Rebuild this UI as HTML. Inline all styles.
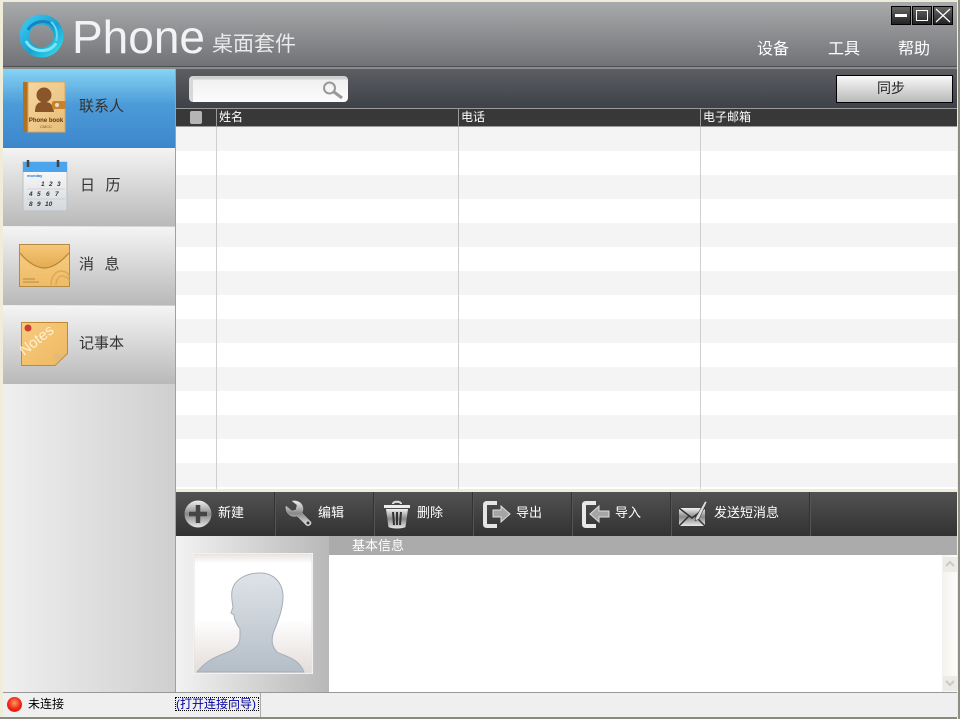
<!DOCTYPE html>
<html><head><meta charset="utf-8"><style>
html,body{margin:0;padding:0;background:#f1efe2}
#w{position:relative;width:960px;height:719px;overflow:hidden;background:#efecd9;font-family:"Liberation Sans","WenQuanYi Zen Hei","Noto Sans CJK SC",sans-serif;font-size:12px;line-height:14px}
#w div,#w svg,#w span{position:absolute;box-sizing:border-box}
.t{white-space:nowrap}
.side{left:3px;width:172px;height:78px;background:linear-gradient(#f4f4f4,#b9b9b9)}
.sl{font-size:15px;line-height:16px;color:#333;white-space:pre}
.sep{top:492px;width:2px;height:44px;background:linear-gradient(90deg,#222,#666)}
.act{top:506px;color:#fff;white-space:nowrap;font-size:13px}
.hd{top:110px;color:#fff;white-space:nowrap}
.vl{top:127px;width:1px;height:362px;background:#cfcfcf}
.hv{top:109px;width:1px;height:18px;background:#999}
.menu{top:41px;font-size:16px;line-height:18px;color:#fff;white-space:nowrap}
.wb{top:6px;width:20px;height:19px;border:1px solid #000;background:linear-gradient(#666,#222)}
</style></head><body><div id="w">
<!-- header -->
<div style="left:3px;top:2px;width:954px;height:64px;background:linear-gradient(#a9aaac,#717275)"></div>
<div style="left:3px;top:66px;width:954px;height:1px;background:#4e4f52"></div>
<div style="left:3px;top:67px;width:954px;height:2px;background:#8a8b8d"></div>
<svg style="left:18px;top:13px" width="47" height="46" viewBox="0 0 47 46"><defs><linearGradient id="rg" x1="0" y1="0" x2="1" y2="1"><stop offset="0" stop-color="#38c8ee"/><stop offset=".55" stop-color="#1a9fd2"/><stop offset="1" stop-color="#2fd6ea"/></linearGradient></defs><ellipse cx="23.500" cy="23" rx="17" ry="16.500" fill="none" stroke="url(#rg)" stroke-width="10"/><path d="M8 28C14 40 32 41 38 30" fill="none" stroke="#7be6f4" stroke-width="3"/><path d="M10 17C14 8 30 5 37 14" fill="none" stroke="#1685bd" stroke-width="3"/><path d="M33 9C39 14 40 22 38 28" fill="none" stroke="#5fdcf2" stroke-width="2"/></svg>
<div class="t" style="left:72px;top:11px;font-size:46px;line-height:52px;color:#f2f3f4">Phone</div>
<div class="t" style="left:212px;top:33px;font-size:21px;line-height:24px;color:#e8e9ea">桌面套件</div>
<div class="menu" style="left:757px">设备</div><div class="menu" style="left:828px">工具</div><div class="menu" style="left:898px">帮助</div>
<div class="wb" style="left:891px"></div><div style="left:895px;top:14px;width:12px;height:3px;background:#fff"></div>
<div class="wb" style="left:912px"></div><div style="left:916px;top:10px;width:12px;height:11px;border:1px solid #fff"></div>
<div class="wb" style="left:933px"></div><svg style="left:933px;top:6px" width="20" height="19"><path d="M3 3L17 16M17 3L3 16" stroke="#fff" stroke-width="1.200"/></svg>
<!-- sidebar -->
<div style="left:3px;top:69px;width:173px;height:624px;background:linear-gradient(90deg,#efefef,#cfcfcf)"></div>
<div style="left:175px;top:69px;width:1px;height:624px;background:#a0a0a0"></div>
<div class="side" style="top:69px;height:79px;background:linear-gradient(#86d4f4,#4c9bd8 45%,#3d86cb)"></div>
<div class="side" style="top:148px"></div><div class="side" style="top:227px"></div><div class="side" style="top:306px"></div>
<!-- book icon -->
<svg style="left:22px;top:80px" width="46" height="54" viewBox="0 0 46 54"><defs><linearGradient id="bk" x1="0" y1="0" x2="1" y2="1"><stop offset="0" stop-color="#f5d8a2"/><stop offset="1" stop-color="#e8bd78"/></linearGradient></defs><rect x="1" y="2" width="42" height="50" fill="url(#bk)"/><rect x="1" y="2" width="5" height="50" fill="#b5701f"/><rect x="6" y="2" width="37" height="50" fill="none" stroke="#d9a860"/><circle cx="22" cy="15" r="7.500" fill="#8a5528"/><path d="M13 32c0-9 4-10 9-10s9 1 10 10z" fill="#8a5528"/><rect x="30" y="21" width="14" height="8" rx="2" fill="#c9822a"/><circle cx="35" cy="25" r="2" fill="#ddd"/><text x="24" y="42" font-size="6" font-weight="bold" font-family="Liberation Sans" text-anchor="middle" fill="#5a3510">Phone book</text><text x="24" y="48" font-size="4" font-family="Liberation Sans" text-anchor="middle" fill="#7a5520">CMCC</text></svg>
<div class="sl" style="left:79px;top:99px">联系人</div>
<!-- calendar -->
<svg style="left:22px;top:159px" width="46" height="54" viewBox="0 0 46 54"><defs><linearGradient id="ca" x1="0" y1="0" x2="0" y2="1"><stop offset="0" stop-color="#fff"/><stop offset="1" stop-color="#d4d8dc"/></linearGradient></defs><rect x="1" y="3" width="44" height="49" fill="url(#ca)" stroke="#bcc0c4"/><path d="M1 3h44v10H1z" fill="#4ba5ee"/><path d="M6 1v7M36 1v7" stroke="#444" stroke-width="2.500"/><text x="5" y="18" font-size="4" fill="#2277dd" font-weight="bold" font-family="Liberation Sans">monday</text><g font-size="6.500" font-style="italic" font-weight="bold" font-family="Liberation Sans" fill="#333"><text x="19" y="27">1</text><text x="27" y="27">2</text><text x="35" y="27">3</text><text x="7" y="37">4</text><text x="15" y="37">5</text><text x="24" y="37">6</text><text x="33" y="37">7</text><text x="7" y="47">8</text><text x="15" y="47">9</text><text x="23" y="47">10</text></g><path d="M5 30h38M5 40h38" stroke="#bbb" stroke-width=".6"/></svg>
<div class="sl" style="left:80px;top:178px;letter-spacing:-.500px">日   历</div>
<!-- envelope -->
<svg style="left:19px;top:244px" width="52" height="44" viewBox="0 0 52 44"><defs><linearGradient id="en" x1="0" y1="0" x2="0" y2="1"><stop offset="0" stop-color="#f7cf87"/><stop offset="1" stop-color="#efbb66"/></linearGradient><linearGradient id="en2" x1="0" y1="0" x2="0" y2="1"><stop offset="0" stop-color="#f6c778"/><stop offset="1" stop-color="#e4ab50"/></linearGradient></defs><rect x=".5" y=".5" width="50" height="42" fill="url(#en)" stroke="#b58a45"/><path d="M1 1h49v8C40 20 32 24 25.500 24S10 20 1 9z" fill="url(#en2)"/><path d="M1 9C10 20 19 24 25.500 24S40 20 50 9" fill="none" stroke="#b5853a" stroke-width="1.200"/><path d="M32 41c0-10 6-14 10-14s8 2 8 6M37 41c0-6 3-9 6-9s7 2 7 5" fill="none" stroke="#dca954" stroke-width="1.500"/><path d="M4 35h12M4 38h16" stroke="#9a7a44" stroke-width=".8"/></svg>
<div class="sl" style="left:79px;top:257px;letter-spacing:-.500px">消   息</div>
<!-- notes -->
<svg style="left:20px;top:321px" width="50" height="46" viewBox="0 0 50 46"><defs><linearGradient id="nt" x1="0" y1="0" x2="1" y2="1"><stop offset="0" stop-color="#f7cb7e"/><stop offset="1" stop-color="#efb862"/></linearGradient></defs><path d="M1.500 1.500h46v31L35 44.500H1.500z" fill="url(#nt)" stroke="#c08a35"/><path d="M47 32L35 44c1-6 0-9-2-12 5 1 9 1 14 0z" fill="#e3ba78"/><circle cx="8" cy="7" r="3.500" fill="#d23a35"/><text x="4" y="35" transform="rotate(-38 4 35)" font-size="15" font-family="Liberation Sans" fill="#fff1d2">Notes</text></svg>
<div class="sl" style="left:79px;top:336px">记事本</div>
<!-- toolbar -->
<div style="left:176px;top:69px;width:781px;height:39px;background:linear-gradient(#5d5e62,#3d4148)"></div>
<div style="left:189px;top:76px;width:159px;height:26px;border-radius:4px;background:linear-gradient(#d0d0d0,#d0d0d0 3px,#f0f0f0 4px,#fcfcfc);border-left:4px solid #d8d8d8"></div>
<svg style="left:321px;top:80px" width="24" height="20"><circle cx="8.500" cy="8" r="5.500" fill="none" stroke="#999" stroke-width="2"/><path d="M13 12l8 6" stroke="#999" stroke-width="3"/></svg>
<div style="left:836px;top:75px;width:117px;height:28px;border:1px solid #000;background:linear-gradient(#f8f8f8,#b9b9b9)"></div>
<div class="t" style="left:877px;top:80px;font-size:14px;line-height:16px;color:#222">同步</div>
<!-- table -->
<div style="left:176px;top:108px;width:781px;height:19px;background:#383838;border-top:1px solid #9a9a9a;border-bottom:1px solid #9a9a9a"></div>
<div style="left:190px;top:111px;width:12px;height:13px;border-radius:2px;background:#b5b5b5"></div>
<div class="hv" style="left:216px"></div><div class="hv" style="left:458px"></div><div class="hv" style="left:700px"></div>
<div class="hd" style="left:219px">姓名</div><div class="hd" style="left:461px">电话</div><div class="hd" style="left:703px">电子邮箱</div>
<div style="left:176px;top:127px;width:781px;height:363px;background:repeating-linear-gradient(#f4f4f4 0,#f4f4f4 24px,#fff 24px,#fff 48px)"></div>
<div class="vl" style="left:216px"></div><div class="vl" style="left:458px"></div><div class="vl" style="left:700px"></div>
<div style="left:176px;top:489px;width:781px;height:3px;background:#efecd9"></div>
<!-- action bar -->
<div style="left:176px;top:492px;width:781px;height:44px;background:linear-gradient(#525252,#323232)"></div>
<div class="sep" style="left:274px"></div><div class="sep" style="left:373px"></div><div class="sep" style="left:472px"></div><div class="sep" style="left:571px"></div><div class="sep" style="left:670px"></div><div class="sep" style="left:809px"></div>
<svg style="left:183px;top:499px" width="30" height="30"><defs><linearGradient id="m" x1="0" y1="0" x2="0" y2="1"><stop offset="0" stop-color="#f2f2f2"/><stop offset=".5" stop-color="#888"/><stop offset="1" stop-color="#e8e8e8"/></linearGradient></defs><circle cx="15" cy="15" r="13.500" fill="url(#m)"/><path d="M15 6v18M6 15h18" stroke="#444" stroke-width="4.500"/></svg>
<svg style="left:283px;top:499px" width="30" height="30"><path d="M3 7l6 5 4-1 1-5-5-4c6-1 11 2 11 8 0 2-1 3-1 4l9 9c1 3-3 5-5 3l-9-9c-6 2-12-3-11-10z" fill="url(#m)" stroke="#bbb" stroke-width=".5"/><circle cx="25" cy="24" r="1.500" fill="#333"/></svg>
<svg style="left:383px;top:499px" width="28" height="30"><path d="M10 5c0-3 8-3 8 0" fill="none" stroke="#ddd" stroke-width="2"/><path d="M1 6h26v3H1z" fill="#eee"/><path d="M3 10h22l-2.500 18c-3 2-14 2-17 0z" fill="url(#m)"/><path d="M10 13l1 13M14 13v13M18 13l-1 13" stroke="#333" stroke-width="2"/></svg>
<svg style="left:483px;top:500px" width="30" height="28"><path d="M14 3H4q-2 0-2 2v19q0 2 2 2h10" fill="none" stroke="#e5e5e5" stroke-width="4"/><path d="M10 10h8V6l9 8-9 8v-5h-8z" fill="#a5a5a5" stroke="#ddd"/></svg>
<svg style="left:582px;top:500px" width="30" height="28"><path d="M14 3H4q-2 0-2 2v19q0 2 2 2h10" fill="none" stroke="#e8e8e8" stroke-width="4"/><path d="M27 11H17V6l-9 8 9 8v-5h10z" fill="#a5a5a5" stroke="#ddd"/></svg>
<svg style="left:678px;top:499px" width="30" height="28"><path d="M1 9h26v18H1z" fill="url(#m)"/><path d="M1 9l13 10L27 9M1 27l10-10M27 27L17 17" fill="none" stroke="#333" stroke-width="1.500"/><path d="M18 18L27 2l2 1-8 17-4 2z" fill="#ddd" stroke="#444" stroke-width=".6"/></svg>
<div class="act" style="left:218px">新建</div><div class="act" style="left:318px">编辑</div><div class="act" style="left:417px">删除</div><div class="act" style="left:516px">导出</div><div class="act" style="left:615px">导入</div><div class="act" style="left:714px">发送短消息</div>
<!-- details -->
<div style="left:176px;top:536px;width:153px;height:156px;background:linear-gradient(90deg,#f2f2f2,#b8b8b8)"></div>
<div style="left:329px;top:536px;width:628px;height:19px;background:#ababab"></div>
<div class="t" style="left:352px;top:539px;color:#fff;font-size:13px">基本信息</div>
<div style="left:329px;top:555px;width:628px;height:137px;background:#fff"></div>
<div style="left:942px;top:555px;width:15px;height:137px;background:linear-gradient(90deg,#f3f2ee,#fdfdfb)"></div>
<div style="left:943px;top:557px;width:14px;height:15px;background:#ecebe5"></div>
<div style="left:943px;top:676px;width:14px;height:15px;background:#ecebe5"></div>
<svg style="left:943px;top:557px" width="14" height="134"><path d="M3 9l4-4 4 4M3 124l4 4 4-4" fill="none" stroke="#c9c9c5" stroke-width="2"/></svg>
<svg style="left:193px;top:553px" width="120" height="121" viewBox="0 0 120 121"><defs><linearGradient id="pb" x1="0" y1="0" x2="0" y2="1"><stop offset="0" stop-color="#e6e2df"/><stop offset=".08" stop-color="#fff"/><stop offset=".55" stop-color="#fff"/><stop offset="1" stop-color="#e3dcd9"/></linearGradient><linearGradient id="pf" x1="0" y1="0" x2="0" y2="1"><stop offset="0" stop-color="#dfe3e8"/><stop offset="1" stop-color="#b4bec8"/></linearGradient></defs><rect x=".5" y=".5" width="119" height="120" fill="url(#pb)" stroke="#fff"/><rect x="1" y="1" width="118" height="119" fill="none" stroke="#e6e2e0"/><path d="M4 119C12 109 20 105 30 101C42 97 47 92 47 84L47 76C44 72 41 66 41 62L38 60L40 54C39 48 38 44 39 38C41 26 54 20 67 20C81 20 90 30 90 44C90 56 85 68 81 78C78 86 78 93 84 99C90 103 105 104 111 119Z" fill="url(#pf)" stroke="#a4aeb8" stroke-width="1"/></svg>
<!-- status -->
<div style="left:3px;top:692px;width:954px;height:25px;background:#efefef;border-top:1px solid #999"></div>
<div style="left:260px;top:693px;width:1px;height:24px;background:#aaa"></div>
<div style="left:7px;top:697px;width:15px;height:15px;border-radius:50%;background:radial-gradient(circle at 50% 40%,#ff9a60,#ee2211 55%,#d81818)"></div>
<div class="t" style="left:28px;top:697px;color:#000">未连接</div>
<div class="t" style="left:175px;top:697px;color:#0000a0;border:1px dotted #000;height:14px;line-height:12px;width:84px">(打开连接向导)</div>
<div style="left:0;top:717px;width:960px;height:2px;background:#8a8a80"></div>
<div style="left:957px;top:0;width:3px;height:719px;background:#8e8e84;border-left:1px solid #efecd9"></div>
</div></body></html>
